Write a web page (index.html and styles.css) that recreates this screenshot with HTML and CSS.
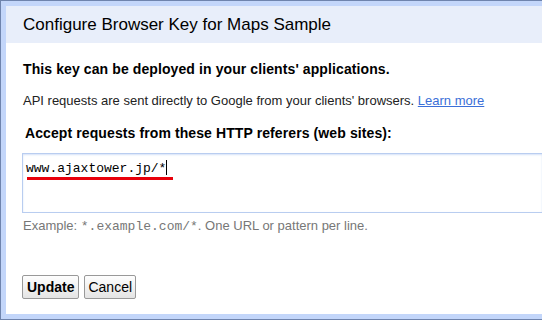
FILE: index.html
```html
<!DOCTYPE html>
<html>
<head>
    <meta charset="UTF-8">
    <link rel="stylesheet" href="styles.css">
</head>
<body>
    <div class="key-frame">
        <div class="key-dialog">
            <div class="dialog-header">
                <h3>Configure Browser Key for Maps Sample</h3>
            </div>
            <div class="dialog-body">
                <p class="lead">This key can be deployed in your clients' applications.</p>
                <p class="note">API requests are sent directly to Google from your clients' browsers. <a href="#">Learn more</a></p>
                <p class="field-label">Accept requests from these HTTP referers (web sites):</p>
                <div class="referer-box">
                    <span class="referer-text">www.ajaxtower.jp/*</span><span class="caret"></span>
                    <div class="marker"></div>
                </div>
                <p class="hint">Example: <code>*.example.com/*</code>. One URL or pattern per line.</p>
                <div class="actions">
                    <button class="btn btn-primary">Update</button>
                    <button class="btn">Cancel</button>
                </div>
            </div>
        </div>
    </div>
</body>
</html>
```

FILE: styles.css
```css
body {
    margin: 0;
    width: 542px;
    height: 320px;
    overflow: hidden;
    background: white;
    font-family: 'Liberation Sans', Arial, sans-serif;
}
.key-frame {
    width: 542px;
    height: 320px;
    border: 1px solid #6f84ad;
    border-right: none;
    background: #c3d6fa;
    padding: 5px 0 5px 5px;
    box-sizing: border-box;
}
.key-dialog {
    background: white;
    height: 100%;
}
.dialog-header {
    background: #e8eefa;
    height: 37px;
    padding-left: 17px;
    display: flex;
    align-items: center;
}
.dialog-header h3 {
    margin: 0;
    font-size: 17px;
    font-weight: normal;
    color: #000;
}
.dialog-body {
    padding: 18px 0 0 16px;
}
.dialog-body p {
    margin: 0;
    font-size: 13px;
    padding-left: 1px;
}
.lead {
    font-weight: bold;
    color: #000;
    font-size: 14px !important;
    letter-spacing: 0.1px;
}
.note {
    color: #222;
    margin-top: 16px !important;
}
.note a {
    color: #3b6fd8;
}
.field-label {
    font-weight: bold;
    font-size: 14px !important;
    letter-spacing: 0.1px;
    margin-top: 17px !important;
    padding-left: 3px !important;
}
.referer-box {
    position: relative;
    margin-top: 12px;
    height: 60px;
    border: 1px solid #b9cdf0;
    border-right: none;
    box-shadow: inset 0 1px 2px #d5e2f8;
    padding: 4px 3px;
    box-sizing: border-box;
}
.referer-text {
    font-family: 'Liberation Mono', 'Courier New', monospace;
    font-size: 13px;
    color: #000;
}
.caret {
    display: inline-block;
    width: 1px;
    height: 15px;
    background: #000;
    vertical-align: -3px;
}
.marker {
    position: absolute;
    left: 4px;
    top: 23px;
    width: 146px;
    height: 3px;
    background: #e8000b;
}
.hint {
    color: #777;
    margin-top: 5px !important;
}
.hint code {
    font-family: 'Liberation Mono', 'Courier New', monospace;
    font-size: 13px;
}
.actions {
    margin-top: 41px;
    display: flex;
    gap: 5px;
}
.btn {
    font-family: 'Liberation Sans', Arial, sans-serif;
    font-size: 14px;
    color: #000;
    height: 24px;
    padding: 0 3px;
    border: 1px solid #999;
    border-radius: 2px;
    background: linear-gradient(#fefefe, #e4e4e4);
}
.btn-primary {
    font-weight: bold;
    padding: 0 4px;
}
```
